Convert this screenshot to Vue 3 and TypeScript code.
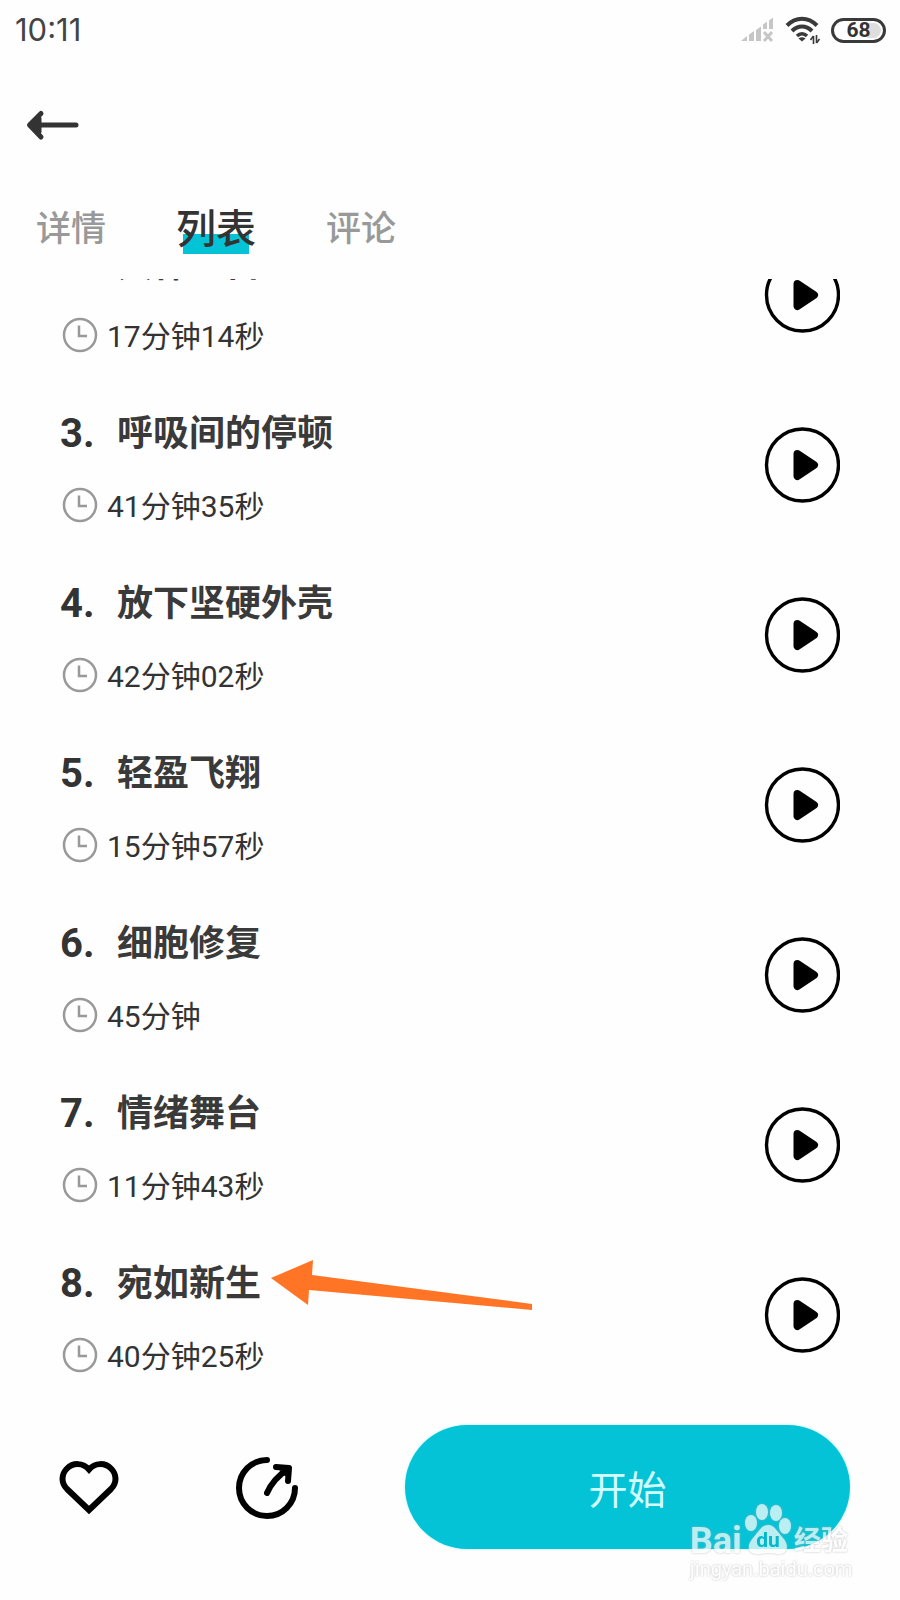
<script setup lang="ts">
import { ref } from 'vue'

interface Track {
  no: number
  title: string
  duration: string
  marked?: boolean
}

const tabs: string[] = ['详情', '列表', '评论']
const activeTab = ref<number>(1)

const tracks: Track[] = [
  { no: 2, title: '大休一日', duration: '17分钟14秒' },
  { no: 3, title: '呼吸间的停顿', duration: '41分钟35秒' },
  { no: 4, title: '放下坚硬外壳', duration: '42分钟02秒' },
  { no: 5, title: '轻盈飞翔', duration: '15分钟57秒' },
  { no: 6, title: '细胞修复', duration: '45分钟' },
  { no: 7, title: '情绪舞台', duration: '11分钟43秒' },
  { no: 8, title: '宛如新生', duration: '40分钟25秒', marked: true },
]
</script>

<template>
  <div class="page">
    <header class="status">
      <span class="time">10:11</span>
      <div class="status-icons">
        <svg class="signal" width="34" height="26" viewBox="0 0 34 26" fill="#c6c6c6" aria-hidden="true">
          <path d="M0 24 L6 19 V24 Z M8 17.500 L13 14 V24 H8 Z M15 13 L20 9.500 V24 H15 Z M22 7.500 L26 4.500 V12 H22 Z M28 3.500 L32 0.500 V12 H28 Z" />
          <path d="M23 15 L31 24 M31 15 L23 24" stroke="#c6c6c6" stroke-width="3" />
        </svg>
        <svg class="wifi" width="36" height="28" viewBox="0 0 36 28" fill="none" stroke="#3a3a3a" stroke-width="4" aria-hidden="true">
          <path d="M2 9.500 C11 0.500 23 0.500 32 9.500" />
          <path d="M7 15 C13 9 21 9 27 15" />
          <path d="M12 20 C15 17 19 17 22 20" stroke-width="3.500" />
          <path d="M17 25.500 L13.500 22.500 Q17 20 20.500 22.500 Z" fill="#3a3a3a" stroke="none" />
          <path d="M28.500 20 V28 M31.500 19 V27" stroke-width="1.600" />
          <path d="M28.500 20 L25.500 24 M31.500 27 L34.500 23" stroke-width="1.600" />
        </svg>
        <span class="battery">68</span>
      </div>
    </header>

    <div class="topbar">
      <button class="icon-btn" type="button" aria-label="返回">
        <svg width="54" height="32" viewBox="0 0 54 32" fill="none" stroke="#333" stroke-width="5" stroke-linecap="round" stroke-linejoin="round">
          <path d="M51 16 H5 M16 4.500 L4.500 16 L16 28 M7 16 L14 9.500 V22.500 Z" />
        </svg>
      </button>
    </div>

    <nav class="tabs">
      <button
        v-for="(tab, i) in tabs"
        :key="tab"
        type="button"
        class="tab"
        :class="{ active: i === activeTab }"
        @click="activeTab = i"
      >{{ tab }}</button>
    </nav>

    <main class="viewport">
      <ol class="tracks">
        <li v-for="track in tracks" :key="track.no" class="track">
          <div class="info">
            <div class="heading">
              <span class="no">{{ track.no }}.</span>
              <h2 class="title">
                {{ track.title }}
                <svg v-if="track.marked" class="pointer" width="262" height="52" viewBox="0 0 262 52" aria-hidden="true">
                  <polygon points="0,20 42,2 41,17 261,46 261,52 38,32 37,47" fill="#ff7425" />
                </svg>
              </h2>
            </div>
            <div class="duration">
              <svg width="40" height="40" viewBox="0 0 40 40" fill="none" stroke="#999" stroke-width="2.500" aria-hidden="true">
                <circle cx="20" cy="18" r="16" />
                <path d="M19 8.500 V19 H27" />
              </svg>
              <span>{{ track.duration }}</span>
            </div>
          </div>
          <button class="icon-btn" type="button" :aria-label="'播放 ' + track.title">
            <svg width="76" height="76" viewBox="0 0 76 76">
              <circle cx="38.500" cy="38" r="36" fill="none" stroke="#000" stroke-width="3.400" />
              <path d="M33.500 27 L50 38 L33.500 49 Z" fill="#000" stroke="#000" stroke-width="8" stroke-linejoin="round" />
            </svg>
          </button>
        </li>
      </ol>
    </main>

    <footer class="actions">
      <button class="icon-btn" type="button" aria-label="收藏">
        <svg width="60" height="60" viewBox="0 0 60 60" fill="none" stroke="#000" stroke-width="6">
          <path d="M30 12.500 C24 5.500 14 5.500 8 11.500 C2 17.500 2 26 8 32 L30 53 L52 32 C58 26 58 17.500 52 11.500 C46 5.500 36 5.500 30 12.500 Z" />
        </svg>
      </button>
      <button class="icon-btn" type="button" aria-label="分享">
        <svg width="64" height="64" viewBox="0 0 64 64" fill="none" stroke="#000" stroke-width="6" stroke-linecap="round" stroke-linejoin="round">
          <path d="M32 5 A28 28 0 1 0 60 33" />
          <path d="M32 38 Q38 24 53 14 M41 12 L54 13 L53 26 M47 14 L52 19" />
        </svg>
      </button>
      <div class="start-wrap">
        <button class="start" type="button">开始</button>
        <div class="watermark">
          <div class="brand">
            <span class="bai">Bai</span>
            <span class="paw">
              <svg width="48" height="52" viewBox="0 0 48 52" fill="#fff" aria-hidden="true">
                <ellipse cx="7" cy="20" rx="6" ry="8" />
                <ellipse cx="18" cy="9" rx="6" ry="8" />
                <ellipse cx="32" cy="10" rx="6" ry="8" />
                <ellipse cx="41" cy="23" rx="6" ry="8" />
                <path d="M24 22 C31 22 34 30 39 35 C46 43 43 51 35 51 C30 51 28 50 24 50 C20 50 18 51 13 51 C4 51 2 43 9 35 C14 30 17 22 24 22 Z" />
              </svg>
              <span class="du">du</span>
            </span>
            <span class="jingyan">经验</span>
          </div>
          <div class="url">jingyan.baidu.com</div>
        </div>
      </div>
    </footer>
  </div>
</template>

<style>
body {
  margin: 0;
  background: #fefefe;
}
</style>

<style scoped>
.page {
  min-height: 100vh;
  display: flex;
  flex-direction: column;
  color: #333;
  background: #fefefe;
  font-family: Roboto, 'Noto Sans CJK SC', sans-serif;
}

button {
  margin: 0;
  padding: 0;
  border: 0;
  background: none;
  color: inherit;
  font-family: inherit;
  cursor: pointer;
}

.icon-btn svg,
.duration svg,
.status-icons svg {
  display: block;
}

.status {
  height: 60px;
  padding: 0 14px 0 15px;
  display: flex;
  align-items: center;
  justify-content: space-between;
}

.time {
  font: 400 31px/42px Inter, sans-serif;
  color: #444;
}

.status-icons {
  display: flex;
  align-items: center;
  gap: 10px;
}

.battery {
  box-sizing: border-box;
  width: 55px;
  height: 25px;
  border: 3px solid #3a3a3a;
  border-radius: 13px;
  background: linear-gradient(90deg, #fefefe 68%, #dedede 68%);
  box-shadow: inset 0 0 0 2px #fefefe;
  font: 700 21px/19px Roboto, sans-serif;
  text-align: center;
  color: #333;
}

.topbar {
  height: 130px;
  padding: 0 25px;
  display: flex;
  align-items: center;
}

.tabs {
  height: 89px;
  padding: 0 36px;
  display: flex;
  align-items: flex-start;
  gap: 70px;
}

.tab {
  height: 80px;
  font-size: 35px;
  line-height: 80px;
  font-weight: 500;
  color: #999;
}

.tab.active {
  font-size: 40px;
  color: #333;
  background: linear-gradient(#05c3d7, #05c3d7) center 44px / 66px 20px no-repeat;
}

.viewport {
  overflow: hidden;
}

.tracks {
  list-style: none;
  margin: -69px 0 0;
  padding: 0;
}

.track {
  box-sizing: border-box;
  height: 170px;
  padding: 0 60px;
  display: flex;
  align-items: center;
  justify-content: space-between;
}

.info {
  display: flex;
  flex-direction: column;
  gap: 27px;
  padding-top: 4px;
}

.heading {
  height: 52px;
  display: flex;
  align-items: center;
}

.track:first-child .heading {
  align-items: baseline;
}

.no {
  width: 57px;
  font-size: 40px;
  line-height: 52px;
  font-weight: 700;
}

.title {
  position: relative;
  margin: 0;
  font-size: 36px;
  line-height: 52px;
  font-weight: 700;
  color: #3a3a3a;
}

.pointer {
  position: absolute;
  left: calc(100% + 10px);
  top: 0;
  overflow: visible;
}

.duration {
  height: 40px;
  display: flex;
  align-items: center;
  gap: 7px;
  font-size: 30px;
  line-height: 40px;
}

.actions {
  padding: 25px 50px 51px 59px;
  display: flex;
  align-items: center;
}

.actions > .icon-btn {
  margin-right: 116px;
}

.actions > .icon-btn + .icon-btn {
  margin-right: 106px;
}

.start-wrap {
  position: relative;
  flex: 1;
}

.start {
  display: block;
  width: 100%;
  height: 124px;
  border-radius: 62px;
  background: #05c3d7;
  box-shadow: 0 0 3px #b8fbff;
  color: #d2ffff;
  font-size: 39px;
}

.watermark {
  position: absolute;
  right: 0;
  bottom: -34px;
  width: 160px;
  color: #fff;
  opacity: 0.72;
  pointer-events: none;
  filter: drop-shadow(0 0 1px #aaa);
}

.brand {
  display: flex;
  align-items: flex-end;
  height: 52px;
}

.bai {
  width: 54px;
  font: 700 36px/28px Roboto, sans-serif;
}

.paw {
  position: relative;
  width: 48px;
  height: 52px;
}

.du {
  position: absolute;
  left: 0;
  right: 0;
  bottom: 4px;
  text-align: center;
  font: 700 21px/22px Roboto, sans-serif;
  color: #05b4c7;
}

.jingyan {
  margin-left: 2px;
  font: 700 27px/32px 'Noto Sans CJK SC', sans-serif;
}

.url {
  font: 400 20px/28px Roboto, sans-serif;
}
</style>
